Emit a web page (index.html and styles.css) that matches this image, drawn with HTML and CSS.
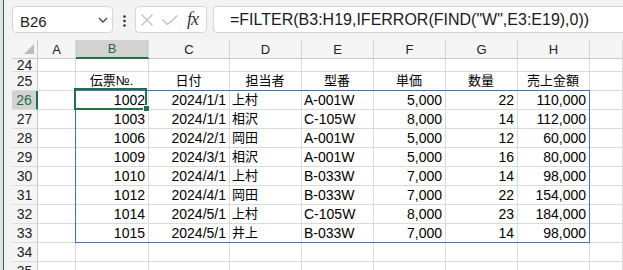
FILE: index.html
```html
<!DOCTYPE html>
<html lang="ja">

<head>
    <meta charset="UTF-8">
    <title>FILTER</title>
    <link rel="stylesheet" href="styles.css">
</head>

<body>
    <div class="window">
        <div class="edge"></div>
        <div class="app">
            <!-- formula bar -->
            <div class="formula-bar">
                <div class="name-box">
                    <span>B26</span>
                    <svg width="10" height="6" viewBox="0 0 10 6"><path d="M1 1L5 5L9 1" fill="none" stroke="#444" stroke-width="1.3" /></svg>
                </div>
                <svg class="more" width="3" height="12" viewBox="0 0 3 12">
                    <circle cx="1.5" cy="1.5" r="1.3" fill="#333" />
                    <circle cx="1.5" cy="6" r="1.3" fill="#333" />
                    <circle cx="1.5" cy="10.5" r="1.3" fill="#333" />
                </svg>
                <div class="fx-box">
                    <svg width="12" height="12" viewBox="0 0 12 12"><path d="M0.5 0.5L11.5 11.5M11.5 0.5L0.5 11.5" stroke="#bdbdbd" stroke-width="1.2" /></svg>
                    <svg class="check" width="16" height="10" viewBox="0 0 16 10"><path d="M0.5 4.5L5.5 9.5L15.5 0.5" fill="none" stroke="#bdbdbd" stroke-width="1.2" /></svg>
                    <span class="fx">fx</span>
                </div>
                <div class="formula-input">=FILTER(B3:H19,IFERROR(FIND("W",E3:E19),0))</div>
            </div>

            <!-- sheet -->
            <div class="sheet">
                <div class="corner"><svg width="10" height="10" viewBox="0 0 10 10"><path d="M10 0V10H0Z" fill="#bcbcbc" /></svg></div>
                <div class="col-head">A</div>
                <div class="col-head is-active">B</div>
                <div class="col-head">C</div>
                <div class="col-head">D</div>
                <div class="col-head">E</div>
                <div class="col-head">F</div>
                <div class="col-head">G</div>
                <div class="col-head">H</div>
                <div class="col-head"></div>

                <div class="row-head short">24</div>
                <div class="cell"></div><div class="cell"></div><div class="cell"></div><div class="cell"></div><div class="cell"></div><div class="cell"></div><div class="cell"></div><div class="cell"></div><div class="cell"></div>

                <div class="row-head">25</div>
                <div class="cell"></div>
                <div class="cell center jp">伝票№.</div>
                <div class="cell center jp">日付</div>
                <div class="cell center jp">担当者</div>
                <div class="cell center jp">型番</div>
                <div class="cell center jp">単価</div>
                <div class="cell center jp">数量</div>
                <div class="cell center jp">売上金額</div>
                <div class="cell"></div>

                <div class="row-head is-active">26</div>
                <div class="cell"></div>
                <div class="cell num is-active">1002</div>
                <div class="cell num">2024/1/1</div>
                <div class="cell jp">上村</div>
                <div class="cell">A-001W</div>
                <div class="cell num">5,000</div>
                <div class="cell num">22</div>
                <div class="cell num">110,000</div>
                <div class="cell"></div>

                <div class="row-head">27</div>
                <div class="cell"></div>
                <div class="cell num">1003</div>
                <div class="cell num">2024/1/1</div>
                <div class="cell jp">相沢</div>
                <div class="cell">C-105W</div>
                <div class="cell num">8,000</div>
                <div class="cell num">14</div>
                <div class="cell num">112,000</div>
                <div class="cell"></div>

                <div class="row-head">28</div>
                <div class="cell"></div>
                <div class="cell num">1006</div>
                <div class="cell num">2024/2/1</div>
                <div class="cell jp">岡田</div>
                <div class="cell">A-001W</div>
                <div class="cell num">5,000</div>
                <div class="cell num">12</div>
                <div class="cell num">60,000</div>
                <div class="cell"></div>

                <div class="row-head">29</div>
                <div class="cell"></div>
                <div class="cell num">1009</div>
                <div class="cell num">2024/3/1</div>
                <div class="cell jp">相沢</div>
                <div class="cell">A-001W</div>
                <div class="cell num">5,000</div>
                <div class="cell num">16</div>
                <div class="cell num">80,000</div>
                <div class="cell"></div>

                <div class="row-head">30</div>
                <div class="cell"></div>
                <div class="cell num">1010</div>
                <div class="cell num">2024/4/1</div>
                <div class="cell jp">上村</div>
                <div class="cell">B-033W</div>
                <div class="cell num">7,000</div>
                <div class="cell num">14</div>
                <div class="cell num">98,000</div>
                <div class="cell"></div>

                <div class="row-head">31</div>
                <div class="cell"></div>
                <div class="cell num">1012</div>
                <div class="cell num">2024/4/1</div>
                <div class="cell jp">岡田</div>
                <div class="cell">B-033W</div>
                <div class="cell num">7,000</div>
                <div class="cell num">22</div>
                <div class="cell num">154,000</div>
                <div class="cell"></div>

                <div class="row-head">32</div>
                <div class="cell"></div>
                <div class="cell num">1014</div>
                <div class="cell num">2024/5/1</div>
                <div class="cell jp">上村</div>
                <div class="cell">C-105W</div>
                <div class="cell num">8,000</div>
                <div class="cell num">23</div>
                <div class="cell num">184,000</div>
                <div class="cell"></div>

                <div class="row-head">33</div>
                <div class="cell"></div>
                <div class="cell num">1015</div>
                <div class="cell num">2024/5/1</div>
                <div class="cell jp">井上</div>
                <div class="cell">B-033W</div>
                <div class="cell num">7,000</div>
                <div class="cell num">14</div>
                <div class="cell num">98,000</div>
                <div class="cell"></div>

                <div class="row-head">34</div>
                <div class="cell"></div><div class="cell"></div><div class="cell"></div><div class="cell"></div><div class="cell"></div><div class="cell"></div><div class="cell"></div><div class="cell"></div><div class="cell"></div>

                <div class="row-head">35</div>
                <div class="cell"></div><div class="cell"></div><div class="cell"></div><div class="cell"></div><div class="cell"></div><div class="cell"></div><div class="cell"></div><div class="cell"></div><div class="cell"></div>

                <!-- spill range of the FILTER result -->
                <div class="spill"></div>
            </div>
        </div>
    </div>
</body>

</html>
```

FILE: styles.css
```css
body {
    margin: 0;
    width: 623px;
    height: 270px;
    overflow: hidden;
    font-family: "Liberation Sans", "Noto Sans CJK JP", sans-serif;
    color: #000;
    background: #fff;
}

.window {
    display: flex;
    height: 270px;
}

.edge {
    flex: none;
    width: 3px;
    background: #e2e2e2;
    border-right: 1px solid #1f6b43;
}

.app {
    flex: 1;
    min-width: 0;
    background: #f3f3f3;
    overflow: hidden;
}

/* formula bar */
.formula-bar {
    display: flex;
    align-items: flex-start;
    height: 40px;
    box-sizing: border-box;
    padding: 6px 0 0 8px;
}

.name-box,
.fx-box,
.formula-input {
    flex: none;
    height: 27px;
    box-sizing: border-box;
    background: #fff;
    border: 1px solid #d6d6d6;
    border-radius: 4px;
}

.name-box {
    width: 101px;
    display: flex;
    align-items: center;
    justify-content: space-between;
    padding: 0 4px 0 7px;
    font-size: 15px;
    color: #1a1a1a;
}

.name-box span {
    padding-top: 3px;
}

.more {
    flex: none;
    margin: 9px 0 0 10px;
}

.fx-box {
    width: 72px;
    margin-left: 9px;
    display: flex;
    align-items: center;
    padding-left: 5px;
}

.check {
    margin-left: 9px;
}

.fx {
    margin-left: 9px;
    font-family: "Liberation Serif", serif;
    font-style: italic;
    font-size: 18px;
    color: #333;
    letter-spacing: -1px;
}

.formula-input {
    flex: 1;
    margin: 0 -10px 0 6px;
    padding-left: 16px;
    font-size: 16px;
    line-height: 25px;
    color: #1a1a1a;
    white-space: nowrap;
}

/* sheet grid */
.sheet {
    position: relative;
    display: grid;
    grid-template-columns: 26px 38px 73px 81px 72px 72px 72px 72px 72px 1fr;
    grid-template-rows: 19px 13px repeat(11, 19px);
    padding-left: 8px;
}

.corner,
.col-head,
.row-head {
    display: flex;
    align-items: center;
    justify-content: center;
    background: #f5f5f5;
    font-size: 13px;
    color: #222;
    overflow: hidden;
}

.corner {
    align-items: flex-end;
    justify-content: flex-end;
    padding: 0 3px 4px 0;
    border-right: 1px solid #c9c9c9;
    border-bottom: 1px solid #c9c9c9;
}

.col-head {
    border-right: 1px solid #d6d6d6;
    border-bottom: 1px solid #c9c9c9;
}

.row-head {
    border-right: 1px solid #c9c9c9;
    border-bottom: 1px solid #dcdcdc;
    font-size: 14px;
}

.row-head.short {
    align-items: flex-start;
    line-height: 13px;
}

.col-head.is-active {
    background: #d2d2d2;
    color: #1e6e42;
    border-bottom: 2px solid #217346;
}

.row-head.is-active {
    background: #d2d2d2;
    color: #1e6e42;
    border-right: 2px solid #217346;
}

.cell {
    display: flex;
    align-items: flex-end;
    padding: 0 3px 1px 2px;
    background: #fff;
    border-right: 1px solid #dadada;
    border-bottom: 1px solid #dadada;
    font-size: 14px;
    line-height: 16px;
    white-space: nowrap;
    overflow: hidden;
}

.cell.num {
    justify-content: flex-end;
}

.cell.center {
    justify-content: center;
}

.cell.jp {
    font-size: 13px;
}

.cell.is-active {
    position: relative;
    z-index: 2;
    overflow: visible;
}

.cell.is-active::before {
    content: "";
    position: absolute;
    left: -2px;
    top: -3px;
    right: 1px;
    bottom: -1px;
    border: 2px solid #217346;
}

.cell.is-active::after {
    content: "";
    position: absolute;
    right: -2px;
    bottom: -3px;
    width: 5px;
    height: 5px;
    background: #217346;
    border: 1px solid #fff;
}

.spill {
    position: absolute;
    left: 71px;
    top: 50px;
    width: 515px;
    height: 153px;
    box-sizing: border-box;
    border: 1px solid #3f72c6;
    z-index: 1;
    pointer-events: none;
}
```
